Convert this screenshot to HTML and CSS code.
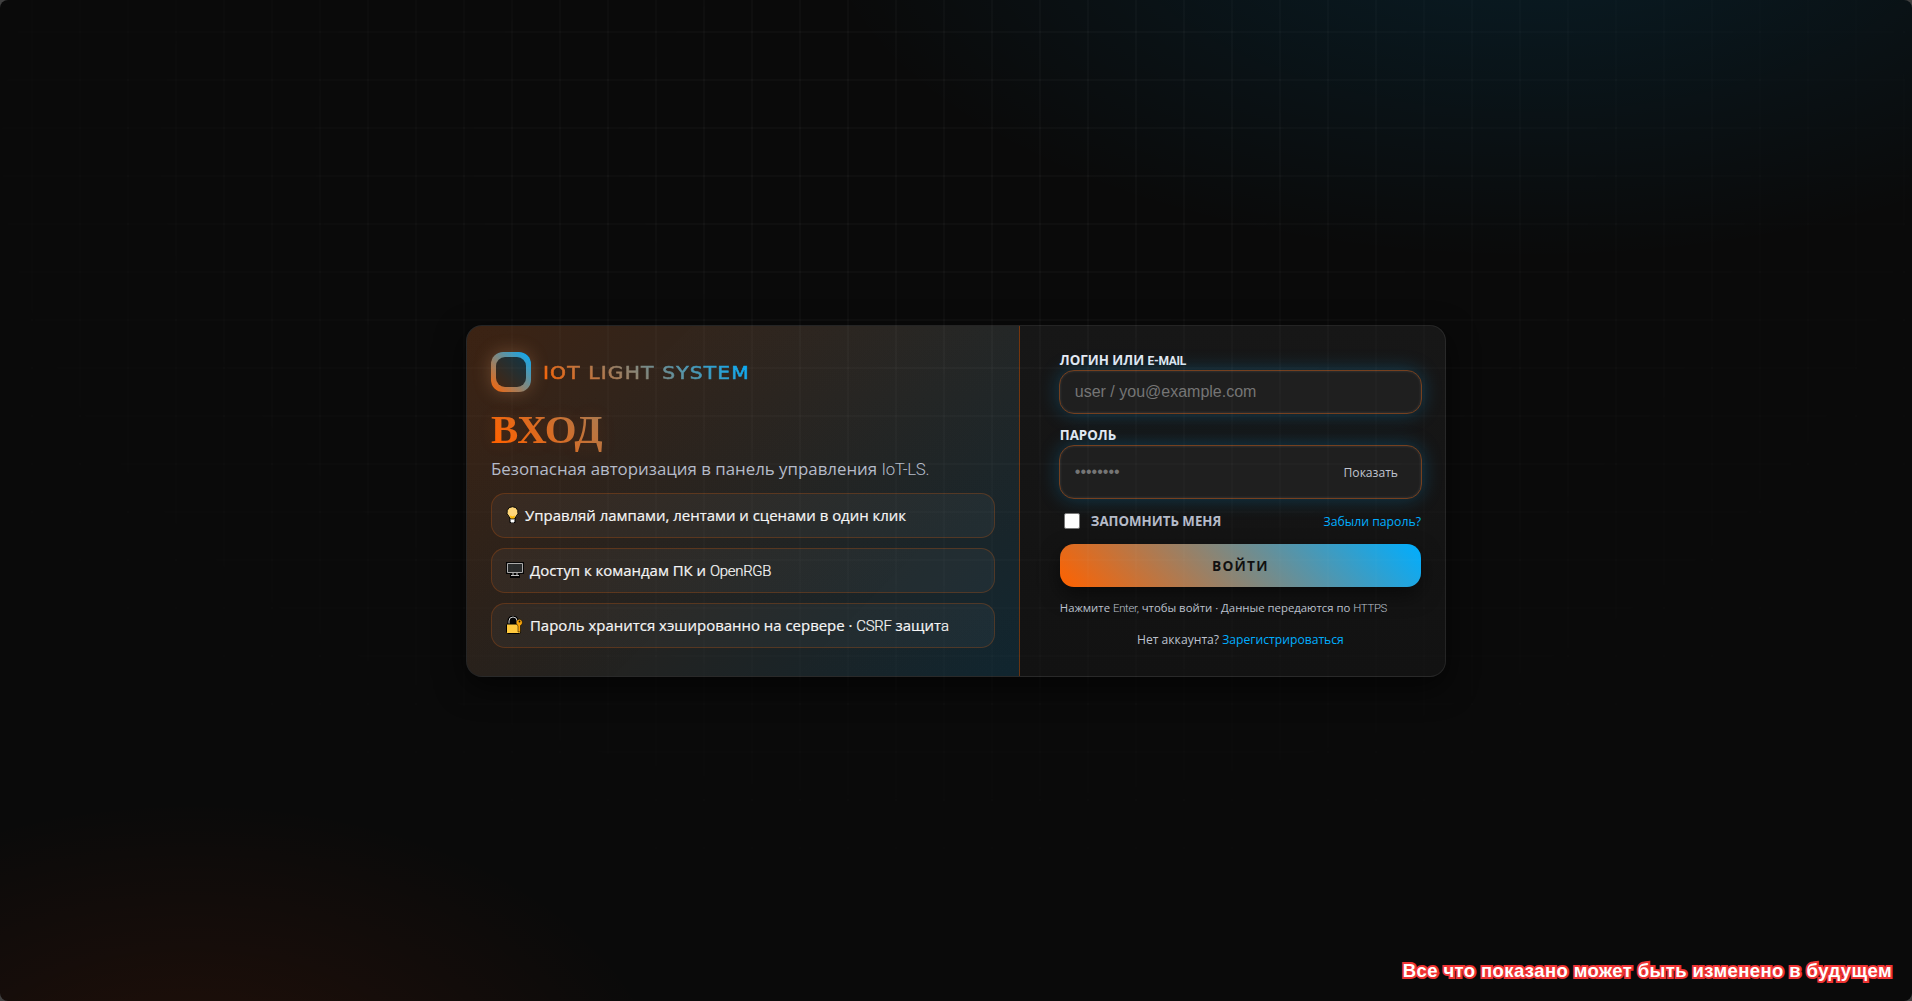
FILE: index.html
```html
<!DOCTYPE html>
<html lang="ru">
<head>
<meta charset="utf-8">
<title>IoT Light System — Вход</title>
<link rel="stylesheet" href="styles.css">
</head>
<body>
<main class="page">
  <section class="card">
    <div class="intro">
      <div class="brand"><span class="logo"></span><span class="brand-name">IOT LIGHT SYSTEM</span></div>
      <h1 class="title"><span>ВХОД</span></h1>
      <p class="lead">Безопасная авторизация в панель управления <span class="lat">IoT-LS.</span></p>
      <ul class="features">
        <li class="feature">
          <svg class="bulb" width="13" height="18" viewBox="0 0 13 18"><path d="M4 10h5v6.500h-5z" fill="#f5f5f5" stroke="#000"/><path d="M6.500.7a5.500 5.500 0 0 0-3.600 9.700l1.300 2h4.600l1.300-2A5.500 5.500 0 0 0 6.500.7z" fill="#ffd679" stroke="#000"/><path d="M4 9.500l2.500 1 2.500-1-.8 3H4.800z" fill="#ffb900"/><path d="M5 13h3v3.500H5z" fill="#fff"/><path d="M5 13.500h3" stroke="#aaa"/></svg>
          <span>Управляй лампами, лентами и сценами в один клик</span>
        </li>
        <li class="feature">
          <svg class="pc" width="18" height="16" viewBox="0 0 18 16"><path d="M0 0h18v12h-4v4H4v-4H0z" fill="#050505"/><path d="M1.500 1.500h15v9h-15z" fill="#292b2b" stroke="#aaa"/><path d="M7 11v2M11 11v2M5 13.500h8" stroke="#c5c5c5" fill="none"/></svg>
          <span>Доступ к командам ПК и <span class="lat">OpenRGB</span></span>
        </li>
        <li class="feature">
          <svg class="lock" width="18" height="18" viewBox="0 0 18 18"><path d="M3 8V5a4 4 0 0 1 8 0v3" fill="#050505" stroke="#000" stroke-width="3"/><path d="M3 8V5a4 4 0 0 1 8 0v3" fill="#050505" stroke="#c9c9c9"/><rect x=".5" y="8" width="14" height="9.500" rx="1" fill="#ffc83d" stroke="#000"/><path d="M13.500 3.200a3.300 3.300 0 0 0-2.200 5.800l.7 1v6h2.500v-6.500A3.300 3.300 0 0 0 13.500 3.200z" fill="#f7a30a" stroke="#000" stroke-width=".5"/><circle cx="13.500" cy="5.500" r=".9" fill="#111"/></svg>
          <span>Пароль хранится хэшированно на сервере · <span class="lat">CSRF</span> защит<span class="lat">а</span></span>
        </li>
      </ul>
    </div>
    <form class="login">
      <label class="label">ЛОГИН ИЛИ <span class="lat">E-MAIL</span></label>
      <div class="field"><input class="input" type="text" placeholder="user / you@example.com"></div>
      <label class="label second">ПАРОЛЬ</label>
      <div class="field tall"><input class="input" type="text" placeholder="••••••••"><button type="button" class="show">Показать</button></div>
      <div class="options"><label class="remember"><span class="box"></span>ЗАПОМНИТЬ МЕНЯ</label><a class="forgot">Забыли пароль?</a></div>
      <button type="button" class="submit">ВОЙТИ</button>
      <p class="hint">Нажмите <span class="lat">Enter,</span> чтобы войти · Данные передаются по <span class="lat">HTTPS</span></p>
      <p class="signup">Нет аккаунта? <a>Зарегистрироваться</a></p>
    </form>
  </section>
  <div class="grid"></div>
  <div class="notice">Все что показано может быть изменено в будущем</div>
</main>
</body>
</html>
```
FILE: styles.css
```css
* { box-sizing: border-box; }
html { background: #404040; }
body { margin: 0; font-family: "Open Sans", sans-serif; color: #e8eaf2; }
.page {
  position: relative; display: flex; align-items: center; justify-content: center;
  height: 1001px; overflow: hidden; border-radius: 8px;
  background:
    radial-gradient(1200px 600px at 80% -10%, rgba(0,174,255,.12), transparent 60%),
    radial-gradient(800px 500px at 10% 110%, rgba(255,70,0,.1), transparent 60%),
    #0a0a0a;
}
.card {
  display: grid; grid-template-columns: 1.3fr 1fr; width: 980px; height: 352px;
  border: 1px solid rgba(255,255,255,.08); border-radius: 16px; overflow: hidden;
  background: linear-gradient(180deg, #171717, #121212);
  box-shadow: 0 10px 30px rgba(0,0,0,.6);
}
.intro {
  padding: 26px 24px 0; border-right: 1px solid rgba(255,98,0,.3);
  background: linear-gradient(135deg, rgba(255,98,0,.16), rgba(0,174,255,.12));
}
.brand { display: flex; align-items: center; gap: 12px; height: 40px; }
.logo {
  position: relative; width: 40px; height: 40px; border-radius: 12px;
  background: linear-gradient(45deg, #ff6200, #00aeff);
  box-shadow: 0 0 18px rgba(255,180,120,.25);
}
.logo::after { content: ""; position: absolute; inset: 5px; border-radius: 9px; background: rgba(15,15,15,.75); }
.brand-name {
  margin-top: 2px; font: 17.800px/24px "DejaVu Sans", sans-serif; white-space: nowrap; letter-spacing: 1px;
  color: transparent; -webkit-text-stroke: .6px transparent;
  background: linear-gradient(45deg, #ff6200, #00aeff); background-clip: text;
  transform: scaleX(1.14); transform-origin: left;
}
.title { margin: 15px 0 0; font: bold 40.900px/46px "Liberation Serif", serif; }
.title span { display: inline-block; vertical-align: top; padding-right: 110px; color: transparent; background: linear-gradient(45deg, #ff6200 5%, #5f9199); background-clip: text; text-shadow: 0 0 18px rgba(255,98,0,.12); }
.lead { margin: 4px 0 0; font-size: 16.850px; line-height: 24px; color: #b5bbc9; white-space: nowrap; }
.lat { font-family: Roboto, sans-serif; font-weight: 300; letter-spacing: -.3px; }
.features { list-style: none; margin: 12px 0 0; padding: 0; display: grid; gap: 10px; }
.feature {
  display: flex; align-items: center; height: 45px; padding: 0 14px; border-radius: 14px;
  border: 1px solid rgba(255,98,0,.22); background: rgba(255,255,255,.04);
  font-size: 14.950px; color: #f5f5f5; white-space: nowrap;
  -webkit-text-stroke: .2px;
}
.bulb { margin-right: 6px; }
.pc, .lock { margin-right: 6px; }
.login { display: flex; flex-direction: column; padding: 25px 24px 0 40px; }
.label { height: 19px; font-size: 13.300px; line-height: 19px; font-weight: 700; white-space: nowrap; }
.label .lat { font-weight: 700; font-size: 12px; }
.field {
  display: flex; align-items: center; height: 44px; margin: 0 -1px; padding: 0 15px; border-radius: 15px;
  background: #1f1f1f; border: 1px solid #75401f;
  box-shadow: 0 0 20px rgba(0,174,255,.26), inset 0 0 3px rgba(255,255,255,.15);
}
.field.tall { height: 54px; padding-right: 23px; }
.second { margin-top: 12px; }
.input { flex: 1; min-width: 0; padding: 0; border: 0; outline: 0; background: none; font: 16px "Liberation Sans", sans-serif; color: #eee; }
.input::placeholder { color: #757575; }
.show { border: 0; padding: 1px 0 0; background: none; font: 12.100px "Open Sans", sans-serif; color: #c0c4d0; }
.options { display: flex; justify-content: space-between; align-items: center; height: 20px; margin-top: 12px; }
.remember { display: flex; align-items: center; padding-left: 4px; gap: 11px; font-size: 13.300px; font-weight: 700; color: #b5bbc9; }
.box { width: 16px; height: 16px; background: #fff; border: 1px solid #767676; border-radius: 2px; }
.forgot { padding-top: 1px; font-size: 12.250px; color: #00aeff; }
.submit {
  height: 43px; margin-top: 13px; border: 0; border-radius: 14px; flex: none;
  background: linear-gradient(45deg, #ff6200, #00aeff); color: #111;
  font: 700 13.700px "Open Sans", sans-serif; letter-spacing: 1.200px; box-shadow: 0 8px 20px rgba(0,0,0,.5);
}
.hint { margin: 12px 0 0; font-size: 11.350px; line-height: 18px; color: #bcc1cd; white-space: nowrap; }
.signup { margin: 13px 0 0; font-size: 12.150px; line-height: 20px; text-align: center; color: #bcc1cd; }
.signup a { color: #00aeff; }
.grid {
  position: absolute; inset: 0; pointer-events: none;
  background:
    linear-gradient(90deg, rgba(255,255,255,.022) 2px, transparent 2px) 31px 31px / 48px 48px,
    linear-gradient(rgba(255,255,255,.022) 2px, transparent 2px) 31px 31px / 48px 48px;
  mask-image: radial-gradient(1250px 850px at 50% 15%, #000 20%, transparent 95%);
}
.notice {
  position: absolute; right: 20px; bottom: 18px; font: bold 18.500px/24px "Liberation Sans", sans-serif; letter-spacing: .400px;
  color: #fff; -webkit-text-stroke: 4px #ef3434; paint-order: stroke fill; white-space: nowrap;
}
```
